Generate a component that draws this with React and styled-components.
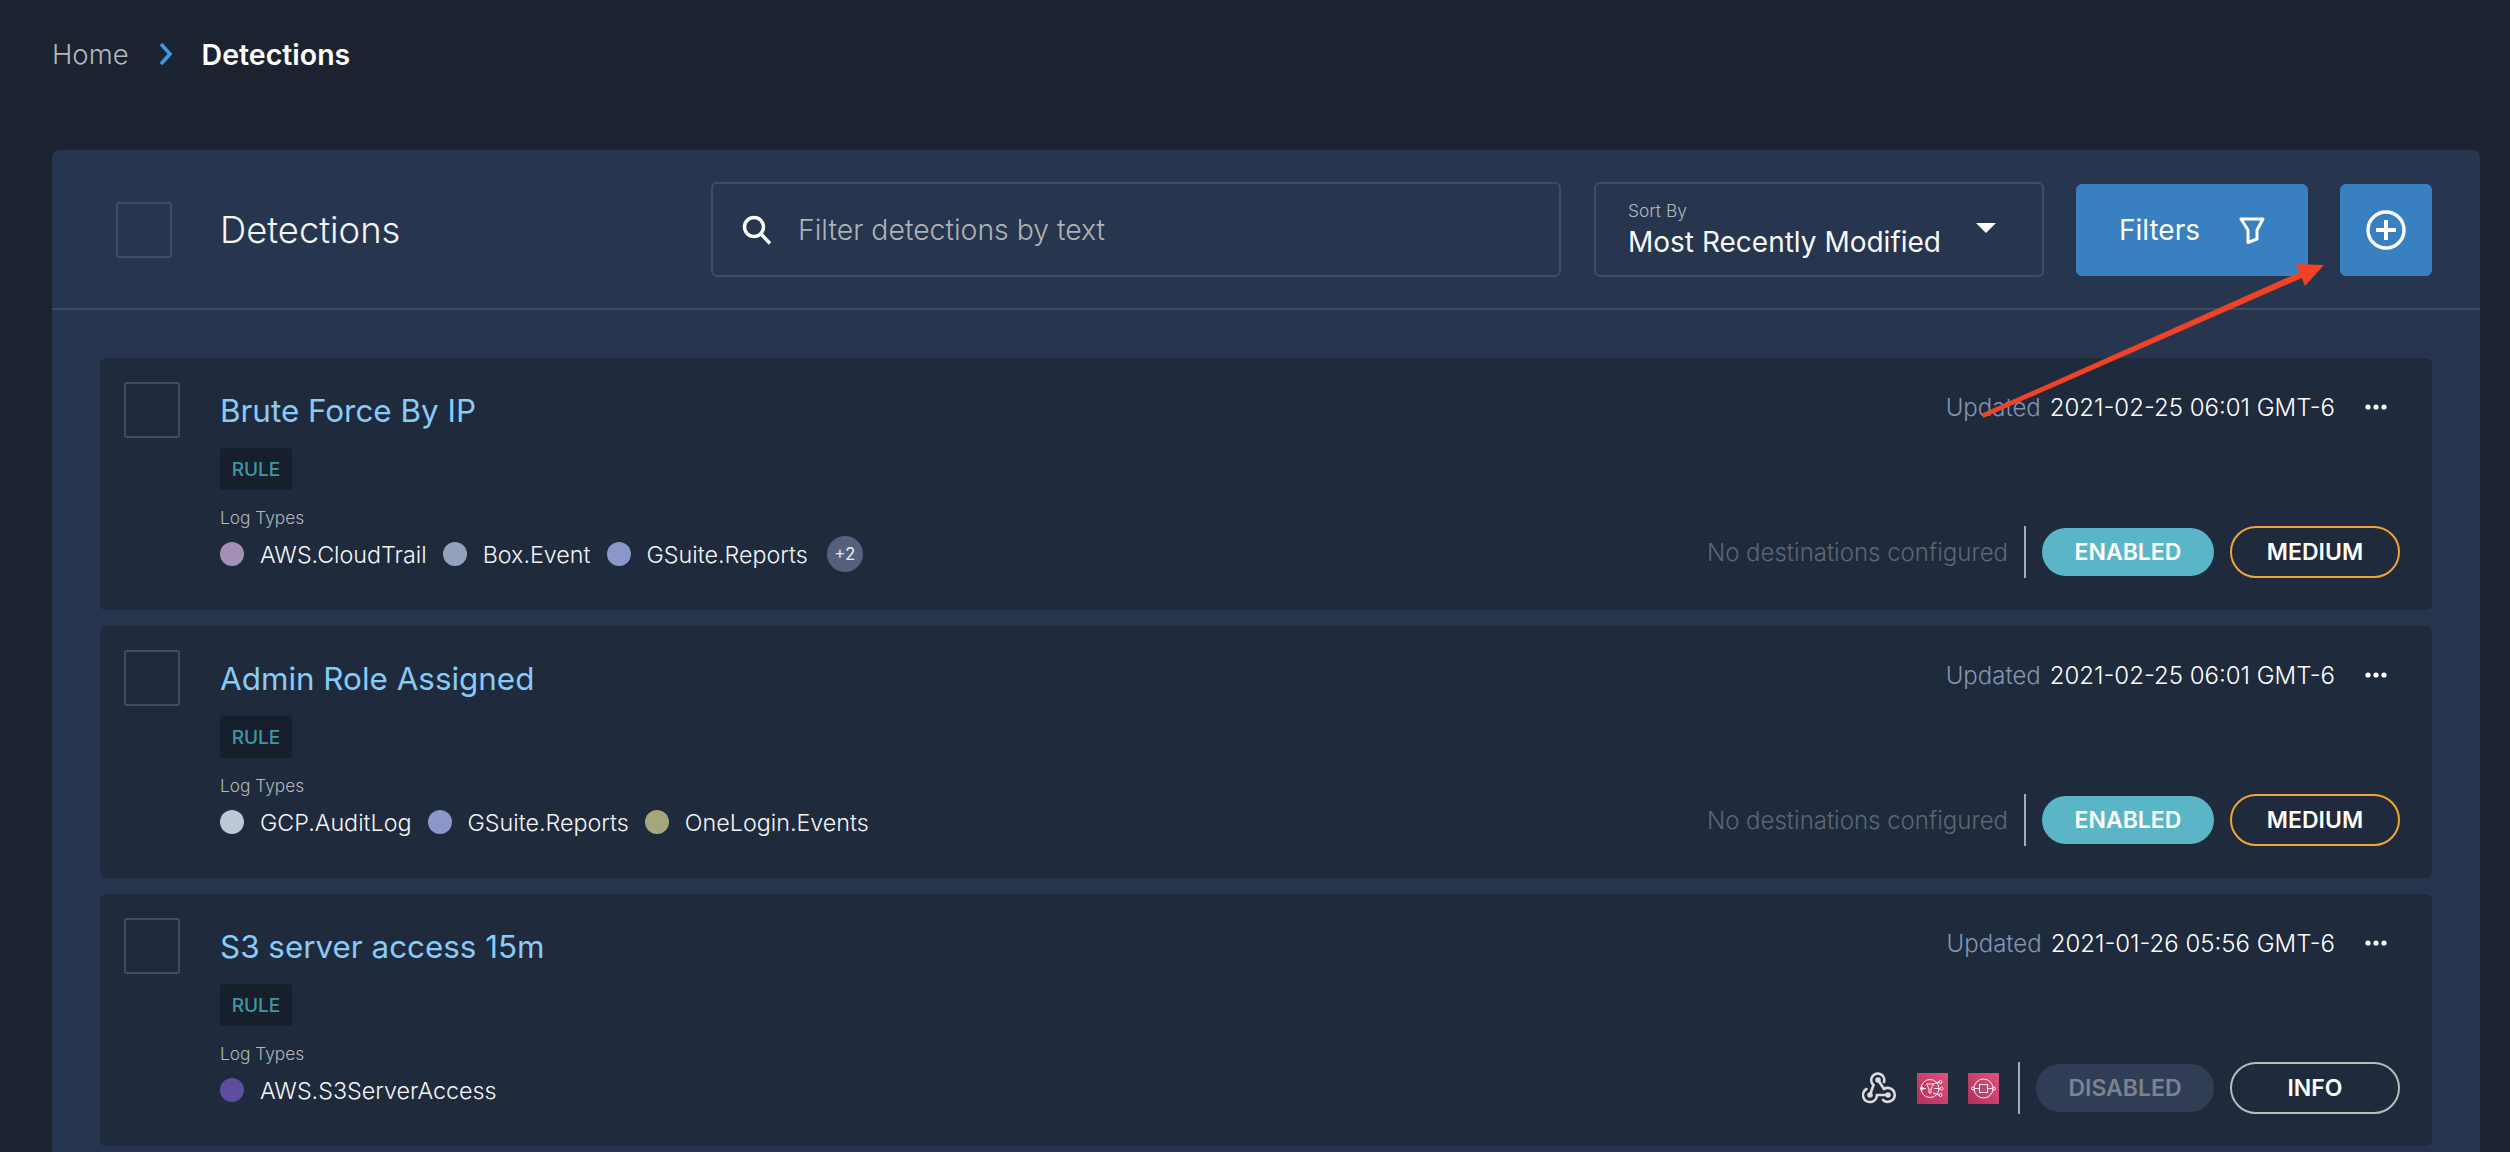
import React from 'react';
import styled, { createGlobalStyle } from 'styled-components';

const GlobalStyle = createGlobalStyle`
  html, body {
    margin: 0;
    height: 100%;
    background: #1b2331;
    overflow: hidden;
  }
  * { box-sizing: border-box; }
`;

// ==============================================
// page and breadcrumb
// ==============================================

const Page = styled.div`
  position: relative;
  width: 2510px;
  height: 1152px;
  padding: 0 30px 0 52px;
  overflow: hidden;
  font-family: Inter, "Liberation Sans", sans-serif;
  color: #fff;
`;

const Breadcrumb = styled.nav`
  display: flex;
  align-items: center;
  height: 150px;
  padding-bottom: 42px;
  font-size: 27.5px;
`;

const Crumb = styled.span`
  color: ${(p) => (p.$current ? '#ffffff' : '#b4b7bb')};
  font-weight: ${(p) => (p.$current ? 600 : 300)};
  font-size: ${(p) => (p.$current ? '28.5px' : 'inherit')};
`;

const CrumbChevron = styled.svg`
  width: 14px;
  height: 24px;
  margin: 0 29px 0 30px;
`;

// ==============================================
// panel header
// ==============================================

const Panel = styled.section`
  background: #27354e;
  border-radius: 8px 8px 0 0;
  height: 1100px;
`;

const PanelHeader = styled.header`
  display: flex;
  align-items: center;
  height: 160px;
  padding: 1px 48px 0 64px;
  border-bottom: 2px solid #3d4a66;
`;

const CheckBox = styled.div`
  flex: none;
  width: 56px;
  height: 56px;
  border: 2px solid #3f4d69;
  border-radius: 3px;
`;

const PanelTitle = styled.h1`
  flex: 1;
  margin: 0 0 0 48px;
  font-size: 36.4px;
  font-weight: 300;
  color: #f4f5f7;
`;

const FieldBox = styled.div`
  display: flex;
  align-items: center;
  height: 95px;
  border: 2px solid #3f4d69;
  border-radius: 6px;
`;

const SearchBox = styled(FieldBox)`
  width: 850px;
  padding-left: 29px;
  gap: 26px;
  font-size: 28.4px;
  font-weight: 300;
  color: #aeb2b8;
`;

const SortBox = styled(FieldBox)`
  width: 450px;
  margin-left: 33px;
  padding: 0 46px 0 32px;
  justify-content: space-between;
`;

const SortText = styled.div`
  display: flex;
  flex-direction: column;
  gap: 4px;
`;

const SortLabel = styled.span`
  font-size: 17.4px;
  font-weight: 300;
  color: #b4b7bb;
`;

const SortValue = styled.span`
  font-size: 28px;
  font-weight: 400;
  color: #f7f8f9;
`;

const Caret = styled.span`
  width: 0;
  height: 0;
  margin-bottom: 4px;
  border-left: 10px solid transparent;
  border-right: 10px solid transparent;
  border-top: 10px solid #fff;
`;

const BlueButton = styled.button`
  display: flex;
  align-items: center;
  justify-content: center;
  height: 92px;
  margin-top: 1px;
  border: none;
  border-radius: 6px;
  background: #3880c0;
  color: #fff;
  font-family: inherit;
  font-size: 28px;
  font-weight: 400;
`;

const FiltersButton = styled(BlueButton)`
  width: 232px;
  margin-left: 32px;
  gap: 39px;
`;

const AddButton = styled(BlueButton)`
  width: 92px;
  margin-left: 32px;
`;

// ==============================================
// detection cards
// ==============================================

const CardList = styled.div`
  display: flex;
  flex-direction: column;
  gap: 16px;
  padding: 48px;
`;

const Card = styled.article`
  display: flex;
  height: 252px;
  padding: 24px 32px 32px 24px;
  background: #1f2a3d;
  border-radius: 6px;
`;

const CardMain = styled.div`
  flex: 1;
  display: flex;
  justify-content: space-between;
  margin-left: 40px;
`;

const CardLeft = styled.div`
  display: flex;
  flex-direction: column;
  padding-top: 9px;
`;

const CardRight = styled.div`
  display: flex;
  flex-direction: column;
  justify-content: space-between;
  align-items: flex-end;
`;

const CardTitle = styled.h2`
  margin: 0;
  height: 40px;
  line-height: 40px;
  font-size: 31.4px;
  font-weight: 400;
  color: #88cbf7;
`;

const TypeTag = styled.span`
  align-self: flex-start;
  display: flex;
  align-items: center;
  justify-content: center;
  width: 72px;
  height: 42px;
  margin-top: 17px;
  background: #171e2c;
  border-radius: 4px;
  font-size: 19px;
  font-weight: 500;
  color: #3f98a3;
`;

const LogLabel = styled.div`
  height: 24px;
  margin-top: 16px;
  line-height: 24px;
  font-size: 17.3px;
  font-weight: 300;
  color: #b4b7bb;
`;

const LogRow = styled.div`
  display: flex;
  align-items: center;
  height: 36px;
  margin-top: 6px;
`;

const LogDot = styled.span`
  width: 24px;
  height: 24px;
  border-radius: 50%;
  background: ${(p) => p.$color};
`;

const LogName = styled.span`
  margin: 0 16px;
  font-size: 23.3px;
  font-weight: 300;
  color: #f4f5f7;
`;

const MoreBadge = styled.span`
  display: flex;
  align-items: center;
  justify-content: center;
  width: 36px;
  height: 36px;
  margin-left: 3px;
  border-radius: 50%;
  background: #55617c;
  font-size: 17px;
  color: #e8eaee;
`;

const UpdatedRow = styled.div`
  display: flex;
  align-items: center;
  height: 32px;
  margin: 9px 13px 0 0;
  font-size: 24px;
  font-weight: 300;
`;

const UpdatedLabel = styled.span`
  color: #8295b3;
  margin-right: 9px;
`;

const DotsIcon = styled.svg`
  width: 22px;
  height: 6px;
  margin-left: 30px;
`;

const StatusRow = styled.div`
  display: flex;
  align-items: center;
`;

const NoDestinations = styled.span`
  margin-right: -1px;
  font-size: 24px;
  font-weight: 300;
  color: #5d6675;
`;

const DestIcons = styled.div`
  display: flex;
  align-items: center;
  gap: 20px;
  margin-right: 2px;
`;

const RowDivider = styled.span`
  width: 2px;
  height: 52px;
  margin: 0 16px 0 17px;
  background: #a9adb3;
`;

const StatusPill = styled.span`
  display: flex;
  align-items: center;
  justify-content: center;
  width: ${(p) => (p.$on ? 172 : 178)}px;
  height: 48px;
  border-radius: 24px;
  background: ${(p) => (p.$on ? '#5ab6c6' : '#313d55')};
  color: ${(p) => (p.$on ? '#ffffff' : '#7b8390')};
  font-size: 23px;
  font-weight: 600;
`;

const SeverityPill = styled.span`
  display: flex;
  align-items: center;
  justify-content: center;
  width: 170px;
  height: 52px;
  margin-left: 16px;
  border: 2px solid ${(p) => p.$color};
  border-radius: 26px;
  color: #fff;
  font-size: 23px;
  font-weight: 600;
`;

const ArrowOverlay = styled.svg`
  position: absolute;
  left: 0;
  top: 0;
  width: 2510px;
  height: 1152px;
  pointer-events: none;
`;

// ==============================================
// small drawings
// ==============================================

const AwsTile = ({ id, children }) => (
  <svg width="31" height="31" viewBox="0 0 31 31">
    <defs>
      <linearGradient id={id} x1="0" y1="1" x2="1" y2="0">
        <stop offset="0" stopColor="#b0305c" />
        <stop offset="1" stopColor="#e0527f" />
      </linearGradient>
    </defs>
    <rect width="31" height="31" fill={`url(#${id})`} />
    <g fill="none" stroke="#fff" strokeWidth="0.9">
      {children}
    </g>
  </svg>
);

const WebhookIcon = () => (
  <svg width="35" height="33" viewBox="0 0 35 33" fill="none" stroke="#dcdcdc" strokeWidth="2.6" strokeLinecap="round">
    <path d="M22 10A6.5 6.5 0 1 0 11.5 13L8 23" />
    <path d="M4.5 17A7 7 0 1 0 15 23H26" />
    <path d="M21 28A7 7 0 1 0 22 17L16 8" />
    <circle cx="16" cy="8" r="1.5" fill="#dcdcdc" />
    <circle cx="8" cy="23" r="1.5" fill="#dcdcdc" />
    <circle cx="26" cy="23" r="1.5" fill="#dcdcdc" />
  </svg>
);

const detections = [
  {
    title: 'Brute Force By IP',
    date: '2021-02-25 06:01 GMT-6',
    logs: [
      ['AWS.CloudTrail', '#a68fb5'],
      ['Box.Event', '#93a2bb'],
      ['GSuite.Reports', '#8a97c8'],
    ],
    more: '+2',
    enabled: true,
    severity: 'MEDIUM',
  },
  {
    title: 'Admin Role Assigned',
    date: '2021-02-25 06:01 GMT-6',
    logs: [
      ['GCP.AuditLog', '#bcc7d8'],
      ['GSuite.Reports', '#8a97c8'],
      ['OneLogin.Events', '#a5a57e'],
    ],
    enabled: true,
    severity: 'MEDIUM',
  },
  {
    title: 'S3 server access 15m',
    date: '2021-01-26 05:56 GMT-6',
    logs: [['AWS.S3ServerAccess', '#5e4c9e']],
    enabled: false,
    severity: 'INFO',
    destinations: true,
  },
];

const App = () => {
  return (
    <Page>
      <GlobalStyle />
      <Breadcrumb>
        <Crumb>Home</Crumb>
        <CrumbChevron viewBox="0 0 14 24">
          <path d="M2 2l9 10-9 10" fill="none" stroke="#3d98e6" strokeWidth="3.6" />
        </CrumbChevron>
        <Crumb $current>Detections</Crumb>
      </Breadcrumb>
      <Panel>
        <PanelHeader>
          <CheckBox />
          <PanelTitle>Detections</PanelTitle>
          <SearchBox>
            <svg width="30" height="30" viewBox="0 0 30 30" fill="none" stroke="#fff" strokeWidth="3.4">
              <circle cx="12" cy="12" r="9.5" />
              <path d="M19 19l9 9.5" />
            </svg>
            Filter detections by text
          </SearchBox>
          <SortBox>
            <SortText>
              <SortLabel>Sort By</SortLabel>
              <SortValue>Most Recently Modified</SortValue>
            </SortText>
            <Caret />
          </SortBox>
          <FiltersButton>
            Filters
            <svg width="26" height="29" viewBox="0 0 26 29" fill="none" stroke="#fff" strokeWidth="3" strokeLinejoin="round">
              <path d="M2 3H24L18 14V23L9 26.5V14Z" />
            </svg>
          </FiltersButton>
          <AddButton>
            <svg width="40" height="40" viewBox="0 0 40 40" fill="none" stroke="#fff">
              <circle cx="20" cy="20" r="18" strokeWidth="3.4" />
              <path d="M10 20h20M20 10v20" strokeWidth="4" />
            </svg>
          </AddButton>
        </PanelHeader>
        <CardList>
          {detections.map((d) => (
            <Card key={d.title}>
              <CheckBox />
              <CardMain>
                <CardLeft>
                  <CardTitle>{d.title}</CardTitle>
                  <TypeTag>RULE</TypeTag>
                  <LogLabel>Log Types</LogLabel>
                  <LogRow>
                    {d.logs.map(([name, color]) => (
                      <React.Fragment key={name}>
                        <LogDot $color={color} />
                        <LogName>{name}</LogName>
                      </React.Fragment>
                    ))}
                    {d.more && <MoreBadge>{d.more}</MoreBadge>}
                  </LogRow>
                </CardLeft>
                <CardRight>
                  <UpdatedRow>
                    <UpdatedLabel>Updated</UpdatedLabel>
                    {d.date}
                    <DotsIcon viewBox="0 0 22 6" fill="#fff">
                      <circle cx="3" cy="3" r="2.6" />
                      <circle cx="11" cy="3" r="2.6" />
                      <circle cx="19" cy="3" r="2.6" />
                    </DotsIcon>
                  </UpdatedRow>
                  <StatusRow>
                    {d.destinations ? (
                      <DestIcons>
                        <WebhookIcon />
                        <AwsTile id="sns">
                          <circle cx="13" cy="15.5" r="9" />
                          <path d="M9.5 11h7l-2.5 5v4h-2v-4z" />
                          <path d="M4 15.5h5M17 15.5h6M16 11l6-2M16 20l6 2" />
                          <circle cx="5" cy="15.5" r="1.4" />
                          <circle cx="23.5" cy="9" r="1.5" />
                          <circle cx="24.5" cy="15.5" r="1.5" />
                          <circle cx="23.5" cy="22" r="1.5" />
                        </AwsTile>
                        <AwsTile id="sqs">
                          <circle cx="15.5" cy="15.5" r="9.5" />
                          <rect x="11.5" y="11.5" width="8" height="8" />
                          <path d="M6 15.5h5M20 15.5h5" />
                          <circle cx="5" cy="15.5" r="1.5" />
                          <circle cx="26" cy="15.5" r="1.5" />
                        </AwsTile>
                      </DestIcons>
                    ) : (
                      <NoDestinations>No destinations configured</NoDestinations>
                    )}
                    <RowDivider />
                    <StatusPill $on={d.enabled}>{d.enabled ? 'ENABLED' : 'DISABLED'}</StatusPill>
                    <SeverityPill $color={d.severity === 'MEDIUM' ? '#f0a536' : '#b9bbbd'}>{d.severity}</SeverityPill>
                  </StatusRow>
                </CardRight>
              </CardMain>
            </Card>
          ))}
        </CardList>
      </Panel>
      <ArrowOverlay viewBox="0 0 2510 1152">
        <path d="M1982 413.5L2300 272l3 5.5L1983 418z" fill="#ee4326" />
        <path d="M2296 264L2324 265L2305 286z" fill="#ee4326" />
      </ArrowOverlay>
    </Page>
  );
};

export default App;
